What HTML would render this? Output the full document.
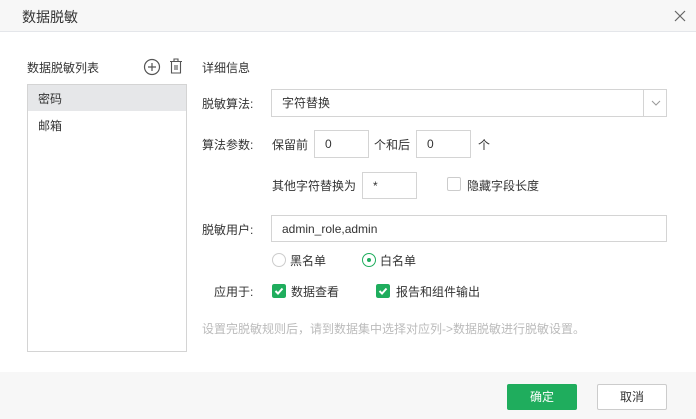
<!DOCTYPE html>
<html><head><meta charset="utf-8"><style>
*{margin:0;padding:0;box-sizing:border-box}
body{width:696px;height:419px;background:#fff;font-family:"Liberation Sans","Noto Sans CJK SC",sans-serif;font-size:12px;color:#333;position:relative;overflow:hidden}
.a{position:absolute;white-space:nowrap}
.hd{position:absolute;left:0;top:0;width:696px;height:32px;background:#f7f7f7;border-bottom:1px solid #e4e6ea}
.ft{position:absolute;left:0;top:372px;width:696px;height:47px;background:#f7f7f7}
.inp{position:absolute;border:1px solid #d4d4d4;background:#fff;padding-left:10px;line-height:26px}
.cb{position:absolute;width:14px;height:14px;border-radius:2px}
</style></head><body>
<div class="hd"></div>
<div class="a" style="left:22px;top:7px;font-size:14px;color:#333">数据脱敏</div>
<svg class="a" style="left:674px;top:10px" width="12" height="12"><path d="M1 1L11 11M11 1L1 11" stroke="#666" stroke-width="1.2"/></svg>
<div class="a" style="left:27px;top:59px">数据脱敏列表</div>
<svg class="a" style="left:143px;top:58px" width="18" height="18"><circle cx="9" cy="9" r="7.5" fill="none" stroke="#555" stroke-width="1.2"/><path d="M9 5V13M5 9H13" stroke="#555" stroke-width="1.2"/></svg>
<svg class="a" style="left:168px;top:57px" width="16" height="18"><path d="M2 4.5H14M6 4.5V2H10V4.5M3.5 4.5V16H12.5V4.5M7 8V13M9 8V13" fill="none" stroke="#555" stroke-width="1.1"/></svg>
<div class="a" style="left:27px;top:84px;width:160px;height:268px;border:1px solid #d4d4d4"></div>
<div class="a" style="left:28px;top:85px;width:158px;height:26px;background:#e6e7e9"></div>
<div class="a" style="left:38px;top:90px">密码</div>
<div class="a" style="left:38px;top:117px">邮箱</div>
<div class="a" style="left:202px;top:59px">详细信息</div>
<div class="a" style="left:202px;top:95px">脱敏算法:</div>
<div class="inp" style="left:271px;top:89px;width:396px;height:28px">字符替换</div>
<div class="a" style="left:643px;top:90px;width:1px;height:26px;background:#d4d4d4"></div>
<svg class="a" style="left:650px;top:98px" width="12" height="10"><path d="M2 3L6 7L10 3" fill="none" stroke="#999" stroke-width="1"/></svg>
<div class="a" style="left:202px;top:136px">算法参数:</div>
<div class="a" style="left:272px;top:136px">保留前</div>
<div class="inp" style="left:314px;top:130px;width:55px;height:28px">0</div>
<div class="a" style="left:374px;top:136px">个和后</div>
<div class="inp" style="left:416px;top:130px;width:55px;height:28px">0</div>
<div class="a" style="left:478px;top:136px">个</div>
<div class="a" style="left:272px;top:177px">其他字符替换为</div>
<div class="inp" style="left:362px;top:172px;width:55px;height:27px">*</div>
<div class="cb" style="left:447px;top:177px;border:1px solid #ccc"></div>
<div class="a" style="left:467px;top:177px">隐藏字段长度</div>
<div class="a" style="left:202px;top:221px">脱敏用户:</div>
<div class="inp" style="left:271px;top:215px;width:396px;height:27px">admin_role,admin</div>
<div class="a" style="left:272px;top:253px;width:14px;height:14px;border:1px solid #ccc;border-radius:50%"></div>
<div class="a" style="left:290px;top:252px">黑名单</div>
<div class="a" style="left:362px;top:253px;width:14px;height:14px;border:1px solid #1fad5d;border-radius:50%"></div>
<div class="a" style="left:367px;top:258px;width:4px;height:4px;background:#1fad5d;border-radius:50%"></div>
<div class="a" style="left:380px;top:252px">白名单</div>
<div class="a" style="left:214px;top:283px">应用于:</div>
<svg class="cb" style="left:272px;top:284px" width="14" height="14"><rect width="14" height="14" rx="2" fill="#1fad5d"/><path d="M3.5 7L6 9.5L10.5 4.5" fill="none" stroke="#fff" stroke-width="2"/></svg>
<div class="a" style="left:291px;top:283px">数据查看</div>
<svg class="cb" style="left:376px;top:284px" width="14" height="14"><rect width="14" height="14" rx="2" fill="#1fad5d"/><path d="M3.5 7L6 9.5L10.5 4.5" fill="none" stroke="#fff" stroke-width="2"/></svg>
<div class="a" style="left:396px;top:283px">报告和组件输出</div>
<div class="a" style="left:202px;top:320px;color:#bbb">设置完脱敏规则后，请到数据集中选择对应列-&gt;数据脱敏进行脱敏设置。</div>
<div class="ft"></div>
<div class="a" style="left:507px;top:384px;width:70px;height:26px;background:#1fad5d;border-radius:2px;color:#fff;text-align:center;line-height:26px">确定</div>
<div class="a" style="left:597px;top:384px;width:70px;height:26px;background:#fff;border:1px solid #ccc;border-radius:2px;color:#333;text-align:center;line-height:24px">取消</div>
</body></html>
